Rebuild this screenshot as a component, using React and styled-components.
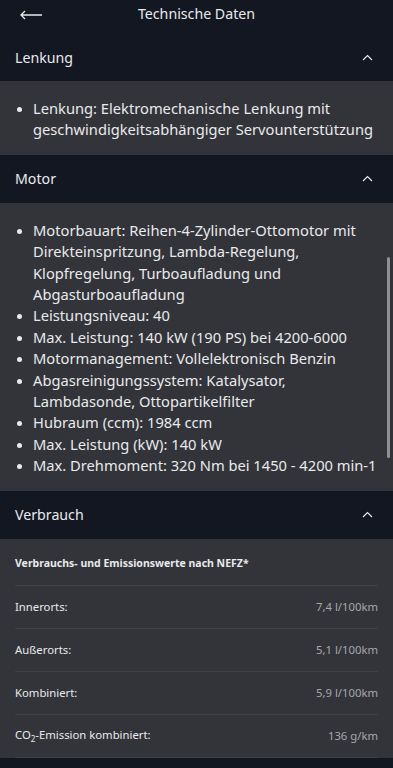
import React from 'react';
import styled, { createGlobalStyle } from 'styled-components';

const Global = createGlobalStyle`
  html, body {
    margin: 0;
    padding: 0;
    background: #131722;
  }
  body {
    font-family: "Noto Sans", "Open Sans", sans-serif;
    color: #e9eaec;
    -webkit-font-smoothing: antialiased;
  }
`;

const Page = styled.div`
  position: relative;
  width: 393px;
  height: 768px;
  overflow: hidden;
  background: #131722;
`;

const TopBar = styled.header`
  display: flex;
  align-items: center;
  justify-content: center;
  position: relative;
  height: 33px;

  button {
    position: absolute;
    left: 18px;
    top: 6px;
    background: none;
    border: 0;
    padding: 0;
    display: flex;
  }
`;

const Title = styled.h1`
  margin: 0;
  font-size: 14.2px;
  font-weight: 400;
  line-height: 1;
  margin-top: -4px;
`;

const SectionHead = styled.div`
  display: flex;
  align-items: center;
  justify-content: space-between;
  height: 48px;
  padding: 0 20px 0 15px;
  font-size: 14.2px;
  background: #131722;
`;

const Body = styled.div`
  background: #333439;
  padding: ${p => p.$pad || '17px 15px 14px 16px'};
`;

const List = styled.ul`
  list-style: none;
  margin: 0;
  padding: 0;
  font-size: 14.7px;
  line-height: 21.4px;
`;

const Item = styled.li`
  position: relative;
  padding-left: 17px;

  &::before {
    content: '';
    position: absolute;
    left: 1px;
    top: 9px;
    width: 5px;
    height: 5px;
    border-radius: 50%;
    background: #e9eaec;
  }
`;

const SubHead = styled.div`
  font-size: 10.5px;
  font-weight: 700;
  padding: 0 0 15px;
  border-bottom: 1px solid #3e4045;
`;

const Row = styled.div`
  display: flex;
  justify-content: space-between;
  align-items: center;
  height: 42px;
  font-size: 11.3px;
  border-bottom: 1px solid #3e4045;

  span:last-child {
    color: #a6a7ab;
  }
`;

const Scroll = styled.div`
  position: absolute;
  right: 3px;
  top: 257px;
  width: 3px;
  height: 201px;
  border-radius: 2px;
  background: #8d8f94;
`;

const Chevron = () => (
  <svg width="11" height="7" viewBox="0 0 11 7" fill="none" stroke="#e9eaec" strokeWidth="1.2">
    <path d="M1 6 L5.5 1.5 L10 6" />
  </svg>
);

const Back = () => (
  <svg width="26" height="18" viewBox="0 0 26 18" fill="none" stroke="#e9eaec" strokeWidth="1.3">
    <path d="M3 9 H24 M7 5 L3 9 L7 13" />
  </svg>
);

const Section = ({ title, children }) => (
  <>
    <SectionHead>
      <span>{title}</span>
      <Chevron />
    </SectionHead>
    {children}
  </>
);

const motor = [
  'Motorbauart: Reihen-4-Zylinder-Ottomotor mit Direkteinspritzung, Lambda-Regelung, Klopfregelung, Turboaufladung und Abgasturboaufladung',
  'Leistungsniveau: 40',
  'Max. Leistung: 140 kW (190 PS) bei 4200-6000',
  'Motormanagement: Vollelektronisch Benzin',
  'Abgasreinigungssystem: Katalysator, Lambdasonde, Ottopartikelfilter',
  'Hubraum (ccm): 1984 ccm',
  'Max. Leistung (kW): 140 kW',
  'Max. Drehmoment: 320 Nm bei 1450 - 4200 min-1',
];

const rows = [
  ['Innerorts:', '7,4 l/100km'],
  ['Außerorts:', '5,1 l/100km'],
  ['Kombiniert:', '5,9 l/100km'],
  [<>CO<sub style={{ fontSize: '8px' }}>2</sub>-Emission kombiniert:</>, '136 g/km'],
];

export default function App() {
  return (
    <Page>
      <Global />
      <TopBar>
        <button aria-label="Zurück"><Back /></button>
        <Title>Technische Daten</Title>
      </TopBar>

      <Section title="Lenkung">
        <Body>
          <List>
            <Item>Lenkung: Elektromechanische Lenkung mit geschwindigkeitsabhängiger Servounterstützung</Item>
          </List>
        </Body>
      </Section>

      <Section title="Motor">
        <Body>
          <List>
            {motor.map(m => <Item key={m}>{m}</Item>)}
          </List>
        </Body>
      </Section>

      <Section title="Verbrauch">
        <Body $pad="17px 15px 0 15px">
          <SubHead>Verbrauchs- und Emissionswerte nach NEFZ*</SubHead>
          {rows.map((r, i) => (
            <Row key={i}>
              <span>{r[0]}</span>
              <span>{r[1]}</span>
            </Row>
          ))}
        </Body>
      </Section>

      <Scroll />
    </Page>
  );
}
